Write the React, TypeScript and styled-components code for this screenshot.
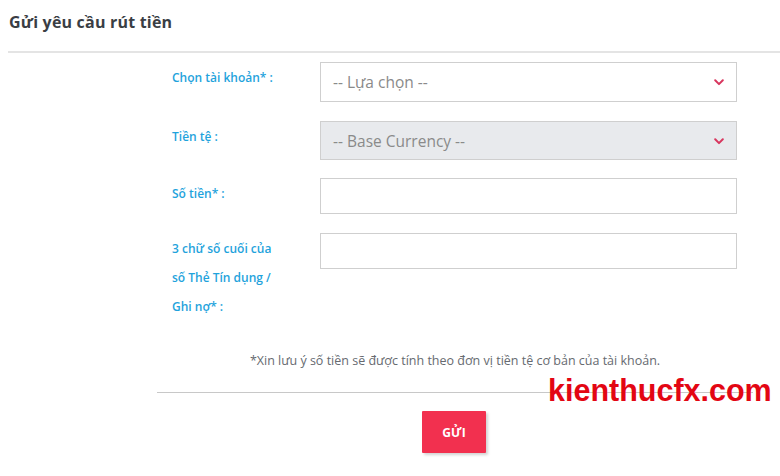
import styled, { createGlobalStyle } from 'styled-components';

const GlobalStyle = createGlobalStyle`
  html, body {
    margin: 0;
    padding: 0;
    background: #ffffff;
  }
  body {
    font-family: "Open Sans", "Noto Sans", sans-serif;
  }
`;

const Chevron = () => (
  <svg width="10" height="7" viewBox="0 0 10 7" fill="none">
    <path d="M1.2 1.3 L5 5.1 L8.8 1.3" stroke="#d8365e" strokeWidth="2" strokeLinecap="round" strokeLinejoin="round" />
  </svg>
);

interface FieldProps {
  label: string[];
  kind: 'select' | 'input';
  placeholder?: string;
  disabled?: boolean;
  height: number;
  gap: number;
}

const Field = ({ label, kind, placeholder, disabled, height, gap }: FieldProps) => (
  <Row $gap={gap}>
    <Label>
      {label.map((line) => (
        <span key={line}>{line}</span>
      ))}
    </Label>
    {kind === 'select' ? (
      <SelectBox $disabled={disabled} $height={height}>
        <span>{placeholder}</span>
        <Chevron />
      </SelectBox>
    ) : (
      <TextBox $height={height} />
    )}
  </Row>
);

const App = () => {
  return (
    <>
      <GlobalStyle />
      <Page>
        <Header>
          <Title>Gửi yêu cầu rút tiền</Title>
        </Header>
        <Form>
          <Fields>
            <Field label={['Chọn tài khoản* :']} kind="select" placeholder="-- Lựa chọn --" height={40} gap={0} />
            <Field label={['Tiền tệ :']} kind="select" placeholder="-- Base Currency --" disabled height={39} gap={19} />
            <Field label={['Số tiền* :']} kind="input" height={36} gap={18} />
            <Field label={['3 chữ số cuối của', 'số Thẻ Tín dụng /', 'Ghi nợ* :']} kind="input" height={36} gap={19} />
          </Fields>
          <Note>*Xin lưu ý số tiền sẽ được tính theo đơn vị tiền tệ cơ bản của tài khoản.</Note>
          <Footer>
            <SubmitButton>GỬI</SubmitButton>
          </Footer>
          <Watermark>kienthucfx.com</Watermark>
        </Form>
      </Page>
    </>
  );
};

const Page = styled.div`
  width: 780px;
  height: 476px;
  overflow: hidden;
`;

const Header = styled.div`
  margin-left: 8px;
  height: 53px;
  border-bottom: 2px solid #e4e4e4;
  box-sizing: border-box;
  padding: 11px 0 0 1px;
`;

const Title = styled.h1`
  margin: 0;
  font-size: 16px;
  font-weight: 700;
  color: #3a3e44;
  letter-spacing: 0.2px;
`;

const Form = styled.div`
  position: relative;
  width: 596px;
  margin: 9px 0 0 157px;
`;

const Fields = styled.div`
  display: flex;
  flex-direction: column;
  padding: 0 16px 0 15px;
`;

const Row = styled.div<{ $gap: number }>`
  display: flex;
  align-items: flex-start;
  margin-top: ${(p) => p.$gap}px;
`;

const Label = styled.div`
  width: 148px;
  flex-shrink: 0;
  display: flex;
  flex-direction: column;
  padding-top: 1px;
  font-size: 12px;
  font-weight: 600;
  line-height: 29px;
  color: #1fa3dc;
`;

const SelectBox = styled.div<{ $disabled?: boolean; $height: number }>`
  flex: 1;
  height: ${(p) => p.$height}px;
  box-sizing: border-box;
  border: 1px solid #cfcfcf;
  background: ${(p) => (p.$disabled ? '#e8eaed' : '#ffffff')};
  display: flex;
  align-items: center;
  justify-content: space-between;
  padding: 0 12px 0 12px;
  font-size: 15.5px;
  color: #8a8a8a;

  svg {
    margin-top: 1px;
  }
`;

const TextBox = styled.div<{ $height: number }>`
  flex: 1;
  height: ${(p) => p.$height}px;
  box-sizing: border-box;
  border: 1px solid #cfcfcf;
  background: #ffffff;
`;

const Note = styled.p`
  margin: 31px 0 0;
  text-align: center;
  font-size: 12.5px;
  color: #666a70;
`;

const Footer = styled.div`
  margin-top: 23px;
  border-top: 1px solid #c8c8c8;
  display: flex;
  justify-content: center;
  padding-top: 18px;
`;

const SubmitButton = styled.button`
  width: 64px;
  height: 42px;
  margin-left: -2px;
  border: none;
  border-radius: 1px;
  background: #f2304f;
  color: #ffffff;
  font-family: "Open Sans", "Noto Sans", sans-serif;
  font-size: 12px;
  font-weight: 700;
  box-shadow: 2px 2px 3px rgba(0, 0, 0, 0.18);
  cursor: pointer;
`;

const Watermark = styled.div`
  position: absolute;
  left: 391px;
  top: 311px;
  font-family: "Liberation Sans", Arial, sans-serif;
  font-size: 30.5px;
  font-weight: 700;
  color: #e30613;
  white-space: nowrap;
`;

export default App;
